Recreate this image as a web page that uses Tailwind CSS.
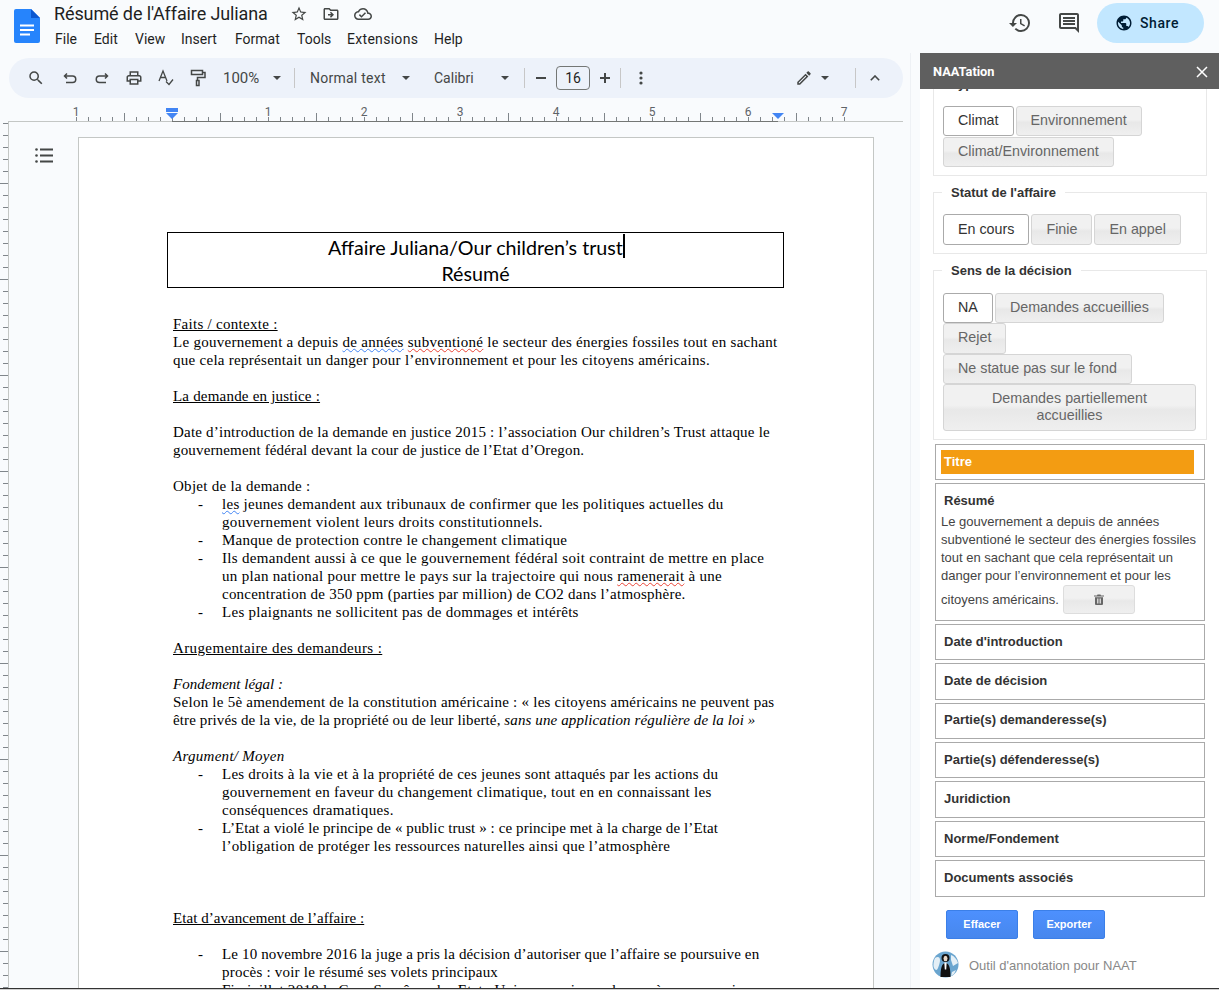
<!DOCTYPE html>
<html lang="fr">
<head>
  <meta charset="UTF-8">
  <title>Résumé de l'Affaire Juliana</title>
  <script src="https://cdn.jsdelivr.net/npm/@tailwindcss/browser@4"></script>
</head>
<body class="w-[1219px] h-[990px] overflow-hidden bg-[#f9fbfd] font-['Roboto',sans-serif] text-[#444746]">

  <!-- top bar -->
  <header class="h-[53px] flex">
    <svg class="ml-[14px] mt-[9px] w-[26px] h-[34px]" viewBox="0 0 26 34">
      <path d="M2 0h15l9 9v23a2 2 0 0 1-2 2H2a2 2 0 0 1-2-2V2a2 2 0 0 1 2-2z" fill="#2684fc"/>
      <path d="M17 0l9 9h-9z" fill="#0b57d0"/>
      <path d="M6 15.500h14v2H6zM6 20h14v2H6zM6 24.500h10v2H6z" fill="#fff"/>
    </svg>
    <div class="ml-[14px] flex-1">
      <div class="flex items-center h-[26px] pt-[1px]">
        <span class="text-[18px] leading-[24px] tracking-[-0.11px] text-[#1f1f1f] w-[225px] whitespace-nowrap">Résumé de l'Affaire Juliana</span>
        <svg class="ml-[11px] w-[18px] h-[18px]" viewBox="0 0 24 24" fill="#444746"><path d="M22 9.240l-7.190-.620L12 2 9.190 8.630 2 9.240l5.460 4.730L5.820 21 12 17.270 18.180 21l-1.630-7.030L22 9.240zM12 15.400l-3.760 2.270 1-4.280-3.320-2.880 4.380-.380L12 6.100l1.710 4.040 4.380.380-3.320 2.880 1 4.280L12 15.400z"/></svg>
        <svg class="ml-[14px] w-[18px] h-[18px]" viewBox="0 0 24 24" fill="#444746"><path d="M20 6h-8l-2-2H4c-1.100 0-1.990.900-1.990 2L2 18c0 1.100.900 2 2 2h16c1.100 0 2-.900 2-2V8c0-1.100-.900-2-2-2zm0 12H4V6h5.170l2 2H20v10zm-8.010-9l-1.410 1.410L12.160 12H8v2h4.160l-1.590 1.590L11.990 17 16 13.010 11.990 9z"/></svg>
        <svg class="ml-[14px] w-[18px] h-[18px]" viewBox="0 0 24 24" fill="#444746"><path d="M19.350 10.040C18.670 6.590 15.640 4 12 4 9.110 4 6.600 5.640 5.350 8.040 2.340 8.360 0 10.910 0 14c0 3.310 2.690 6 6 6h13c2.760 0 5-2.240 5-5 0-2.640-2.050-4.780-4.650-4.960zM19 18H6c-2.210 0-4-1.790-4-4 0-2.050 1.530-3.760 3.560-3.970l1.070-.110.500-.950C8.080 7.140 9.940 6 12 6c2.620 0 4.880 1.860 5.390 4.430l.300 1.500 1.530.110c1.560.100 2.780 1.410 2.780 2.960 0 1.650-1.350 3-3 3zm-9-3.820l-2.090-2.090L6.500 13.500 10 17l6.010-6.010-1.410-1.410z"/></svg>
      </div>
      <nav class="flex ml-[1px] mt-[3px] text-[14px] leading-[20px] text-[#1f1f1f]">
        <span class="w-[39px]">File</span><span class="w-[41px]">Edit</span><span class="w-[46px]">View</span><span class="w-[54px]">Insert</span><span class="w-[62px]">Format</span><span class="w-[50px]">Tools</span><span class="w-[87px] tracking-[0.3px]">Extensions</span><span>Help</span>
      </nav>
    </div>
    <svg class="mt-[11px] w-[24px] h-[24px]" viewBox="0 0 24 24" fill="#444746"><path d="M13 3a9 9 0 0 0-9 9H1l3.890 3.890.070.140L9 12H6c0-3.870 3.130-7 7-7s7 3.130 7 7-3.130 7-7 7c-1.930 0-3.680-.790-4.940-2.060l-1.420 1.420A8.954 8.954 0 0 0 13 21a9 9 0 0 0 0-18zm-1 5v5l4.280 2.540.720-1.210-3.500-2.080V8H12z"/></svg>
    <svg class="ml-[25px] mt-[11px] w-[24px] h-[24px]" viewBox="0 0 24 24" fill="#444746"><path d="M21.990 4c0-1.100-.890-2-1.990-2H4c-1.100 0-2 .900-2 2v12c0 1.100.900 2 2 2h14l4 4-.010-18zM20 4v13.170L18.830 16H4V4h16zM6 12h12v2H6zm0-3h12v2H6zm0-3h12v2H6z"/></svg>
    <div class="ml-[16px] mr-[15px] mt-[3px] w-[107px] h-[40px] rounded-full bg-[#c2e7ff] flex items-center pl-[18px] text-[14px] font-medium tracking-[0.6px] text-[#001d35]">
      <svg class="w-[18px] h-[18px]" viewBox="0 0 24 24" fill="#001d35"><path d="M12 2C6.480 2 2 6.480 2 12s4.480 10 10 10 10-4.480 10-10S17.520 2 12 2zm-1 17.930c-3.950-.490-7-3.850-7-7.930 0-.620.080-1.210.210-1.790L9 15v1c0 1.100.900 2 2 2v1.930zm6.900-2.540c-.260-.810-1-1.390-1.900-1.390h-1v-3c0-.550-.450-1-1-1H8v-2h2c.550 0 1-.450 1-1V7h2c1.100 0 2-.900 2-2v-.410c2.930 1.190 5 4.060 5 7.410 0 2.080-.800 3.970-2.100 5.390z"/></svg>
      <span class="ml-[7px]">Share</span>
    </div>
  </header>

  <div class="flex h-[935px]">
    <!-- editor -->
    <div class="w-[910px] pt-[5px] flex flex-col">
      <!-- toolbar -->
      <div class="ml-[9px] w-[894px] h-[40px] rounded-full bg-[#edf2fa] flex items-center text-[14px] text-[#444746] shrink-0">
        <svg class="ml-[18px] w-[18px] h-[18px]" viewBox="0 0 24 24" fill="#444746"><path d="M15.500 14h-.790l-.280-.270A6.471 6.471 0 0 0 16 9.500 6.500 6.500 0 1 0 9.500 16c1.610 0 3.090-.590 4.230-1.570l.270.280v.790l5 4.990L20.490 19l-4.990-5zm-6 0C7.010 14 5 11.990 5 9.500S7.010 5 9.500 5 14 7.010 14 9.500 11.990 14 9.500 14z"/></svg>
        <svg class="ml-[17px] w-[16px] h-[16px]" viewBox="0 0 16 16" fill="none" stroke="#444746" stroke-width="1.500"><path d="M5 3.500L2.500 6 5 8.500M3 6h7.500a3 3 0 0 1 0 6.500H4"/></svg>
        <svg class="ml-[16px] w-[16px] h-[16px]" viewBox="0 0 16 16" fill="none" stroke="#444746" stroke-width="1.500"><path d="M11 3.500L13.500 6 11 8.500M13 6H5.500a3 3 0 0 0 0 6.500H12"/></svg>
        <svg class="ml-[15px] w-[18px] h-[18px]" viewBox="0 0 24 24" fill="#444746"><path d="M19 8h-1V3H6v5H5c-1.660 0-3 1.340-3 3v6h4v4h12v-4h4v-6c0-1.660-1.340-3-3-3zM8 5h8v3H8V5zm8 12v2H8v-4h8v2zm2-2v-2H6v2H4v-4c0-.550.450-1 1-1h14c.550 0 1 .450 1 1v4h-2z"/></svg>
        <svg class="ml-[14px] w-[18px] h-[18px]" viewBox="0 0 18 18" fill="none" stroke="#444746" stroke-width="1.300"><path d="M2 12L6 2l4 10M3.400 8.500h5.200M9 12.500l3 3 4-5"/></svg>
        <svg class="ml-[14px] w-[18px] h-[18px]" viewBox="0 0 18 18" fill="none" stroke="#444746" stroke-width="1.500"><path d="M2.500 1.500h11v4h-11zM13.500 3.500h2.500v5H8.500v3"/><path d="M7.500 11.500h2.500v5H7.500z"/></svg>
        <span class="ml-[16px] w-[38px] text-[15px]">100%</span>
        <svg class="ml-[12px] w-[8px] h-[4px]" viewBox="0 0 8 4" fill="#444746"><path d="M0 0h8L4 4z"/></svg>
        <div class="ml-[13px] w-px h-[20px] bg-[#c7c7c7]"></div>
        <span class="ml-[15px] w-[78px] whitespace-nowrap tracking-[0.25px]">Normal text</span>
        <svg class="ml-[14px] w-[8px] h-[4px]" viewBox="0 0 8 4" fill="#444746"><path d="M0 0h8L4 4z"/></svg>
        <span class="ml-[24px] w-[44px]">Calibri</span>
        <svg class="ml-[23px] w-[8px] h-[4px]" viewBox="0 0 8 4" fill="#444746"><path d="M0 0h8L4 4z"/></svg>
        <div class="ml-[15px] w-px h-[20px] bg-[#c7c7c7]"></div>
        <div class="ml-[11px] w-[10px] h-[2px] bg-[#444746]"></div>
        <div class="ml-[10px] w-[34px] h-[24px] border border-[#747775] rounded-[4px] flex items-center justify-center text-[14px] text-[#1f1f1f]">16</div>
        <svg class="ml-[9px] w-[12px] h-[12px]" viewBox="0 0 12 12" fill="#444746"><path d="M5 1h2v4h4v2H7v4H5V7H1V5h4z"/></svg>
        <div class="ml-[9px] w-px h-[20px] bg-[#c7c7c7]"></div>
        <svg class="ml-[18px] w-[4px] h-[14px]" viewBox="0 0 4 14" fill="#444746"><circle cx="2" cy="2" r="1.600"/><circle cx="2" cy="7" r="1.600"/><circle cx="2" cy="12" r="1.600"/></svg>
        <svg class="ml-[152px] w-[18px] h-[18px]" viewBox="0 0 24 24" fill="#444746"><path d="M14.060 9.020l.920.920L5.920 19H5v-.920l9.060-9.060M17.660 3c-.250 0-.510.100-.700.290l-1.830 1.830 3.750 3.750 1.830-1.830c.390-.390.390-1.020 0-1.410l-2.340-2.340c-.200-.200-.450-.290-.710-.290zm-3.600 3.190L3 17.250V21h3.750L17.810 9.940l-3.750-3.750z"/></svg>
        <svg class="ml-[8px] w-[8px] h-[4px]" viewBox="0 0 8 4" fill="#444746"><path d="M0 0h8L4 4z"/></svg>
        <div class="ml-[26px] w-px h-[20px] bg-[#c7c7c7]"></div>
        <svg class="ml-[14px] w-[10px] h-[6px]" viewBox="0 0 10 6" fill="none" stroke="#444746" stroke-width="1.600"><path d="M.8 5.200L5 1l4.200 4.200"/></svg>
      </div>

      <!-- horizontal ruler -->
      <svg class="shrink-0 w-[903px] h-[24px]" viewBox="0 98 903 24">
        <defs>
          <pattern id="hticks" x="4" y="117" width="12" height="4" patternUnits="userSpaceOnUse"><rect width="1" height="4" fill="#80868b"/></pattern>
          <pattern id="hhalf" x="28" y="113" width="96" height="8" patternUnits="userSpaceOnUse"><rect width="1" height="8" fill="#80868b"/></pattern>
        </defs>
        <rect x="76" y="117" width="780" height="4" fill="url(#hticks)"/>
        <rect x="124" y="113" width="720" height="8" fill="url(#hhalf)"/>
        <rect x="8" y="121" width="895" height="1" fill="#c4c7c5"/>
        <rect x="172" y="121" width="606" height="1" fill="#747775"/>
        <g font-family="Roboto, sans-serif" font-size="12" fill="#5f6368" text-anchor="middle">
          <text x="76" y="116">1</text><text x="268" y="116">1</text><text x="364" y="116">2</text><text x="460" y="116">3</text><text x="556" y="116">4</text><text x="652" y="116">5</text><text x="748" y="116">6</text><text x="844" y="116">7</text>
        </g>
        <path d="M166 108h12v4h-12zM166 113h12l-6 6z" fill="#4285f4"/>
        <path d="M772 113h12l-6 6z" fill="#4285f4"/>
      </svg>

      <div class="flex flex-1 min-h-0">
        <!-- vertical ruler -->
        <svg class="shrink-0 w-[8px] h-[867px]" viewBox="0 122 8 867">
          <defs>
            <pattern id="vticks" x="3" y="123" width="5" height="12" patternUnits="userSpaceOnUse"><rect width="5" height="1" fill="#80868b"/></pattern>
            <pattern id="vhalf" x="0" y="87" width="8" height="96" patternUnits="userSpaceOnUse"><rect width="8" height="1" fill="#80868b"/></pattern>
          </defs>
          <rect x="3" y="122" width="5" height="867" fill="url(#vticks)"/>
          <rect x="0" y="122" width="8" height="867" fill="url(#vhalf)"/>
        </svg>
        <!-- document area -->
        <div class="relative w-[902px] overflow-hidden border-l border-[#c4c7c5]">
          <svg class="absolute left-[26px] top-[26px] w-[18px] h-[15px]" viewBox="0 0 18 15" fill="#444746">
            <circle cx="1.500" cy="1.500" r="1.300"/><circle cx="1.500" cy="7.500" r="1.300"/><circle cx="1.500" cy="13.500" r="1.300"/>
            <path d="M5 .500h13v2H5zM5 6.500h13v2H5zM5 12.500h13v2H5z"/>
          </svg>
          <!-- page -->
          <div class="ml-[69px] mt-[15px] w-[796px] h-[900px] bg-white border border-[#c4c7c5] pt-[94px] pl-[88px]">
            <div class="w-[617px] h-[56px] pt-[2px] border border-black flex flex-col items-center justify-center font-['Lato',sans-serif] text-[19.700px] leading-[26px] text-black">
              <div class="relative whitespace-nowrap">Affaire Juliana/Our children’s trust<span class="absolute -right-[2px] -top-[1px] w-[2px] h-[24px] bg-black"></span></div>
              <div>Résumé</div>
            </div>
            <div class="mt-[27px] ml-[6px] w-[620px] font-['Liberation_Serif',serif] text-[15px] leading-[18px] text-black whitespace-nowrap tracking-[0.28px]">
              <div class="underline">Faits / contexte :</div>
              <div>Le gouvernement a depuis <span class="underline decoration-wavy decoration-[#4285f4] decoration-1">de années</span> <span class="underline decoration-wavy decoration-[#ea4335] decoration-1">subventioné</span> le secteur des énergies fossiles tout en sachant</div>
              <div>que cela représentait un danger pour l’environnement et pour les citoyens américains.</div>
              <div class="h-[18px]"></div>
              <div class="underline tracking-[0.2px]">La demande en justice :</div>
              <div class="h-[18px]"></div>
              <div class="tracking-[0.21px]">Date d’introduction de la demande en justice 2015 : l’association Our children’s Trust attaque le</div>
              <div class="tracking-[0.16px]">gouvernement fédéral devant la cour de justice de l’Etat d’Oregon.</div>
              <div class="h-[18px]"></div>
              <div>Objet de la demande :</div>
              <ul>
                <li class="flex"><span class="w-[49px] pl-[25px]">-</span><span><span class="underline decoration-wavy decoration-[#4285f4] decoration-1">les</span> jeunes demandent aux tribunaux de confirmer que les politiques actuelles du<br><span class="tracking-[0.32px]">gouvernement violent leurs droits constitutionnels.</span></span></li>
                <li class="flex"><span class="w-[49px] pl-[25px]">-</span><span>Manque de protection contre le changement climatique</span></li>
                <li class="flex"><span class="w-[49px] pl-[25px]">-</span><span class="tracking-[0.30px]">Ils demandent aussi à ce que le gouvernement fédéral soit contraint de mettre en place<br>un plan national pour mettre le pays sur la trajectoire qui nous <span class="underline decoration-wavy decoration-[#ea4335] decoration-1">ramenerait</span> à une<br><span class="tracking-[0.23px]">concentration de 350 ppm (parties par million) de CO2 dans l’atmosphère.</span></span></li>
                <li class="flex"><span class="w-[49px] pl-[25px]">-</span><span>Les plaignants ne sollicitent pas de dommages et intérêts</span></li>
              </ul>
              <div class="h-[18px]"></div>
              <div class="underline tracking-[0.38px]">Arugementaire des demandeurs :</div>
              <div class="h-[18px]"></div>
              <div class="italic tracking-[0px]">Fondement légal :</div>
              <div class="tracking-[0.24px]">Selon le 5è amendement de la constitution américaine : « les citoyens américains ne peuvent pas</div>
              <div class="tracking-[0.11px]">être privés de la vie, de la propriété ou de leur liberté, <span class="italic">sans une application régulière de la loi »</span></div>
              <div class="h-[18px]"></div>
              <div class="italic">Argument/ Moyen</div>
              <ul>
                <li class="flex"><span class="w-[49px] pl-[25px]">-</span><span><span class="tracking-[0.23px]">Les droits à la vie et à la propriété de ces jeunes sont attaqués par les actions du</span><br>gouvernement en faveur du changement climatique, tout en en connaissant les<br><span class="tracking-[0.34px]">conséquences dramatiques.</span></span></li>
                <li class="flex"><span class="w-[49px] pl-[25px]">-</span><span><span class="tracking-[0.09px]">L’Etat a violé le principe de « public trust » : ce principe met à la charge de l’Etat</span><br><span class="tracking-[0.25px]">l’obligation de protéger les ressources naturelles ainsi que l’atmosphère</span></span></li>
              </ul>
              <div class="h-[54px]"></div>
              <div class="underline tracking-[0.05px]">Etat d’avancement de l’affaire :</div>
              <div class="h-[18px]"></div>
              <ul>
                <li class="flex"><span class="w-[49px] pl-[25px]">-</span><span><span class="tracking-[0.15px]">Le 10 novembre 2016 la juge a pris la décision d’autoriser que l’affaire se poursuive en</span><br><span class="tracking-[0.22px]">procès : voir le résumé ses volets principaux</span><br>Fin juillet 2018 la Cour Suprême des Etats-Unis a permis que le procès se poursuive</span></li>
              </ul>
            </div>
          </div>
        </div>
      </div>
    </div>

    <!-- scrollbar gutter -->
    <div class="w-[10px] border-l border-[#eef1f5]"></div>

    <!-- NAATation side panel -->
    <aside class="w-[299px] bg-white flex flex-col font-['Liberation_Sans',sans-serif] text-[13px] text-[#333]">
      <div class="h-[36px] shrink-0 bg-[#5f5f5f] flex items-center justify-between pl-[13px] pr-[10px] pt-[1px] relative z-10">
        <span class="font-['Roboto',sans-serif] font-bold text-[12.800px] text-white">NAATation</span>
        <svg class="w-[14px] h-[14px]" viewBox="0 0 14 14" stroke="#fff" stroke-width="1.500"><path d="M2 2l10 10M12 2L2 12"/></svg>
      </div>
      <div class="flex-1 overflow-hidden">
        <div class="-mt-[15px] pl-[13px] pr-[12px]">
          <fieldset class="border border-[#e8e8e8] px-[9px] pb-[8px] pt-[12px]">
            <legend class="-ml-[1px] px-[9px] font-bold">Type</legend>
            <div class="flex flex-wrap gap-x-[2px] gap-y-[1px] text-[14.300px]">
              <button class="h-[30px] px-[14px] border border-[#aaa] rounded-[3px] bg-white text-[#333]">Climat</button>
              <button class="h-[30px] px-[14px] border border-[#d5d5d5] rounded-[3px] bg-[linear-gradient(#f1f1f1_45%,#e8e8e8_55%,#efefef)] text-[#666]">Environnement</button>
              <button class="h-[30px] px-[14px] border border-[#d5d5d5] rounded-[3px] bg-[linear-gradient(#f1f1f1_45%,#e8e8e8_55%,#efefef)] text-[#666]">Climat/Environnement</button>
            </div>
          </fieldset>
          <fieldset class="mt-[7px] border border-[#e8e8e8] px-[9px] pb-[8px] pt-[12px]">
            <legend class="-ml-[1px] px-[9px] font-bold">Statut de l'affaire</legend>
            <div class="flex flex-wrap gap-x-[2px] text-[14.300px]">
              <button class="h-[31px] px-[14px] border border-[#aaa] rounded-[3px] bg-white text-[#333]">En cours</button>
              <button class="h-[31px] px-[14px] border border-[#d5d5d5] rounded-[3px] bg-[linear-gradient(#f1f1f1_45%,#e8e8e8_55%,#efefef)] text-[#666]">Finie</button>
              <button class="h-[31px] px-[14px] border border-[#d5d5d5] rounded-[3px] bg-[linear-gradient(#f1f1f1_45%,#e8e8e8_55%,#efefef)] text-[#666]">En appel</button>
            </div>
          </fieldset>
          <fieldset class="mt-[7px] border border-[#e8e8e8] px-[9px] pb-[8px] pt-[12px]">
            <legend class="-ml-[1px] px-[9px] font-bold">Sens de la décision</legend>
            <div class="flex flex-wrap gap-x-[2px] text-[14.300px]">
              <button class="h-[30px] px-[14px] border border-[#aaa] rounded-[3px] bg-white text-[#333]">NA</button>
              <button class="h-[30px] px-[14px] border border-[#d5d5d5] rounded-[3px] bg-[linear-gradient(#f1f1f1_45%,#e8e8e8_55%,#efefef)] text-[#666]">Demandes accueillies</button>
              <button class="h-[31px] px-[14px] border border-[#d5d5d5] rounded-[3px] bg-[linear-gradient(#f1f1f1_45%,#e8e8e8_55%,#efefef)] text-[#666]">Rejet</button>
              <div class="w-full"></div>
              <button class="h-[30px] px-[14px] border border-[#d5d5d5] rounded-[3px] bg-[linear-gradient(#f1f1f1_45%,#e8e8e8_55%,#efefef)] text-[#666]">Ne statue pas sur le fond</button>
              <button class="w-[253px] h-[47px] px-[14px] leading-[17px] border border-[#d5d5d5] rounded-[3px] bg-[linear-gradient(#f1f1f1_45%,#e8e8e8_55%,#efefef)] text-[#666]">Demandes partiellement accueillies</button>
            </div>
          </fieldset>

          <div class="mx-[2px] mt-[4px] flex flex-col gap-[3px] font-bold">
            <div class="h-[36px] border border-[#aaa] pl-[5px] pr-[10px] py-[5px]">
              <div class="h-[24px] bg-[#f39c12] text-white pl-[3px] flex items-center">Titre</div>
            </div>
            <div class="h-[138px] border border-[#aaa] px-[5px]">
              <div class="pl-[3px] pt-[9px] leading-[15px]">Résumé</div>
              <div class="mt-[5px] font-normal text-[#444] leading-[18px]">Le gouvernement a depuis de années subventioné le secteur des énergies fossiles tout en sachant que cela représentait un danger pour l’environnement et pour les citoyens américains.
                <button class="align-middle ml-[1px] mb-[2px] w-[72px] h-[29px] border border-[#ddd] rounded-[3px] bg-[linear-gradient(#f1f1f1_45%,#e8e8e8_55%,#efefef)] inline-flex items-center justify-center">
                  <svg class="w-[10px] h-[11px]" viewBox="0 0 10 11" fill="#666"><path d="M0 1.500h3l.500-1h3l.500 1h3v1H0zM1 3.200h8V10a1 1 0 0 1-1 1H2a1 1 0 0 1-1-1z"/><path d="M3 4.500h.8v5H3zM4.600 4.500h.8v5h-.8zM6.200 4.500H7v5h-.8z" fill="#f0f0f0"/></svg>
                </button>
              </div>
            </div>
            <div class="h-[36px] border border-[#aaa] pl-[8px] flex items-center">Date d'introduction</div>
            <div class="h-[37px] border border-[#aaa] pl-[8px] flex items-center">Date de décision</div>
            <div class="h-[36px] border border-[#aaa] pl-[8px] pb-[1px] flex items-center">Partie(s) demanderesse(s)</div>
            <div class="h-[36px] border border-[#aaa] pl-[8px] flex items-center">Partie(s) défenderesse(s)</div>
            <div class="h-[37px] border border-[#aaa] pl-[8px] flex items-center">Juridiction</div>
            <div class="h-[36px] border border-[#aaa] pl-[8px] flex items-center">Norme/Fondement</div>
            <div class="h-[37px] border border-[#aaa] pl-[8px] flex items-center">Documents associés</div>
          </div>

          <div class="mt-[13px] ml-[13px] flex gap-[15px]">
            <button class="w-[72px] h-[29px] border border-[#3b7fe8] rounded-[2px] bg-[linear-gradient(#4d90fe,#4787ed)] text-white font-bold text-[11px]">Effacer</button>
            <button class="w-[72px] h-[29px] border border-[#3b7fe8] rounded-[2px] bg-[linear-gradient(#4d90fe,#4787ed)] text-white font-bold text-[11px]">Exporter</button>
          </div>
          <div class="mt-[12px] -ml-[1px] flex items-center text-[#888]">
            <svg class="w-[27px] h-[27px]" viewBox="0 0 27 27">
              <circle cx="13.500" cy="13.500" r="13" fill="#6aa5cf"/>
              <path d="M3 7c3-2 5-1 5 2s-1 5-2 8-3 2-4 0-.5-7 1-10zM19 4c3 1 6 4 7 8l-5 3-2-6zM20 21l4-2-2 4-3 2z" fill="#e4eff6"/>
              <path d="M8.500 26c0-8 1.200-14 5-14s5 6 5 14z" fill="#111"/>
              <circle cx="13.500" cy="7" r="4" fill="#111"/>
              <ellipse cx="13.500" cy="7.500" rx="2" ry="2.700" fill="#e8d8c8"/>
              <path d="M12.300 11.500h2.400l-.5 7h-1.400z" fill="#fff"/>
            </svg>
            <span class="ml-[10px] mt-[3px]">Outil d'annotation pour NAAT</span>
          </div>
        </div>
      </div>
    </aside>
  </div>

  <div class="h-px bg-[#333]"></div>
  <div class="h-px bg-[#d0d0d0]"></div>
</body>
</html>
